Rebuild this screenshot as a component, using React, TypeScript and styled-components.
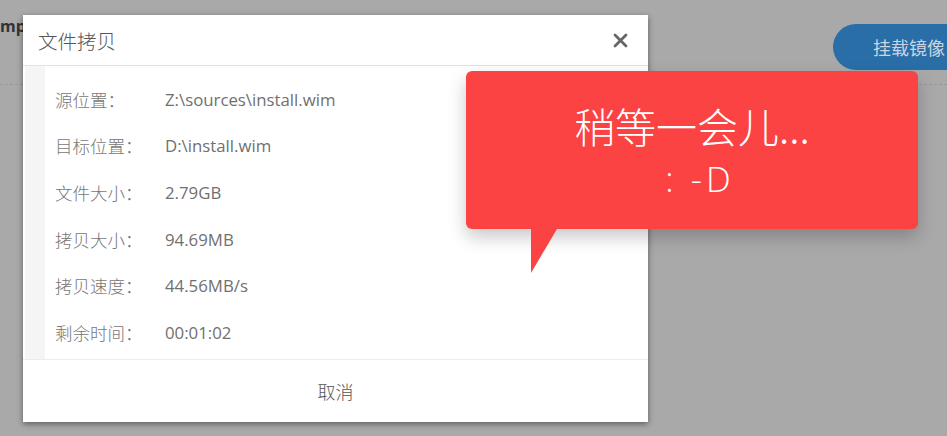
import styled, { createGlobalStyle } from "styled-components";

const GlobalStyle = createGlobalStyle`
  html, body {
    margin: 0;
    padding: 0;
    width: 947px;
    height: 436px;
    overflow: hidden;
    background-color: #a9a9a9;
    font-family: "Open Sans", "Noto Sans CJK SC", sans-serif;
  }
`;

const Page = styled.div`
  position: relative;
  width: 947px;
  height: 436px;
  background-color: #a9a9a9;
`;

const TopBar = styled.div`
  display: flex;
  justify-content: space-between;
  align-items: center;
  height: 85px;
  border-bottom: 1px dashed #999;
  box-sizing: border-box;
`;

const PageTitle = styled.span`
  align-self: flex-start;
  margin-top: 15px;
  font-size: 16px;
  font-weight: bold;
  color: #333;
`;

const MountButton = styled.button`
  width: 140px;
  height: 46px;
  margin-right: -26px;
  margin-top: 10px;
  padding: 0 0 0 40px;
  text-align: left;
  border: none;
  border-radius: 23px;
  background-color: #2a6ea8;
  color: #c9d5e2;
  font-family: "Noto Sans CJK SC", sans-serif;
  font-size: 18px;
  white-space: nowrap;
`;

const Dialog = styled.div`
  position: absolute;
  left: 23px;
  top: 15px;
  width: 625px;
  height: 407px;
  display: flex;
  flex-direction: column;
  background-color: #fff;
  box-shadow: 0 2px 6px rgba(0, 0, 0, 0.45);
`;

const Header = styled.div`
  display: flex;
  justify-content: space-between;
  align-items: center;
  height: 51px;
  padding: 0 20px 0 15px;
  border-bottom: 1px solid #e2e2e2;
  box-sizing: border-box;
  flex-shrink: 0;
`;

const Title = styled.span`
  font-family: "Noto Sans CJK SC", sans-serif;
  font-size: 19.5px;
  font-weight: 300;
  color: #555;
`;

const CloseButton = styled.span`
  display: flex;
  align-items: center;
  cursor: pointer;
`;

const Body = styled.div`
  display: flex;
  height: 293px;
  border-bottom: 1px solid #ececec;
  flex-shrink: 0;
`;

const Strip = styled.div`
  width: 20px;
  margin-left: 2px;
  background-color: #f5f5f5;
`;

const Rows = styled.div`
  display: flex;
  flex-direction: column;
  padding: 10px 0 0 10px;
`;

const Row = styled.div`
  display: flex;
  align-items: center;
  height: 46.6px;
`;

const Label = styled.span`
  width: 110px;
  color: #777;
  font-family: "Noto Sans CJK SC", sans-serif;
  font-size: 17.5px;
  font-weight: 300;
`;

const Value = styled.span`
  color: #707070;
  font-size: 16.8px;
`;

const Footer = styled.div`
  flex: 1;
  display: flex;
  justify-content: center;
  align-items: center;
  font-family: "Noto Sans CJK SC", sans-serif;
  font-size: 18px;
  font-weight: 300;
  color: #555;
`;

const Toast = styled.div`
  position: absolute;
  left: 466px;
  top: 71px;
  width: 452px;
  height: 158px;
  display: flex;
  flex-direction: column;
  align-items: center;
  box-sizing: border-box;
  padding-top: 26px;
  border-radius: 6px;
  background-color: #fc4343;
  color: #fff;
  box-shadow: 0 8px 18px rgba(0, 0, 0, 0.22);

  &::after {
    content: "";
    position: absolute;
    left: 65px;
    top: 100%;
    width: 0;
    height: 0;
    border-top: 44px solid #fc4343;
    border-right: 26px solid transparent;
  }
`;

const ToastMain = styled.span`
  font-family: "Noto Sans CJK SC", sans-serif;
  font-size: 41px;
  font-weight: 300;
  line-height: 56px;
`;

const ToastFace = styled.span`
  margin-top: 6px;
  margin-left: 16px;
  font-family: "Open Sans", sans-serif;
  font-size: 35px;
  font-weight: 300;
  line-height: 40px;
  letter-spacing: 4px;
`;

const rows = [
  { label: "源位置：", value: "Z:\\sources\\install.wim" },
  { label: "目标位置：", value: "D:\\install.wim" },
  { label: "文件大小：", value: "2.79GB" },
  { label: "拷贝大小：", value: "94.69MB" },
  { label: "拷贝速度：", value: "44.56MB/s" },
  { label: "剩余时间：", value: "00:01:02" },
];

const App = () => {
  return (
    <Page>
      <GlobalStyle />
      <TopBar>
        <PageTitle>mp</PageTitle>
        <MountButton>挂载镜像</MountButton>
      </TopBar>
      <Dialog>
        <Header>
          <Title>文件拷贝</Title>
          <CloseButton>
            <svg width="15" height="15" viewBox="0 0 15 15">
              <path d="M2 2 L13 13 M13 2 L2 13" stroke="#666" strokeWidth="2.8" strokeLinecap="round" />
            </svg>
          </CloseButton>
        </Header>
        <Body>
          <Strip />
          <Rows>
            {rows.map((r) => (
              <Row key={r.label}>
                <Label>{r.label}</Label>
                <Value>{r.value}</Value>
              </Row>
            ))}
          </Rows>
        </Body>
        <Footer>取消</Footer>
      </Dialog>
      <Toast>
        <ToastMain>稍等一会儿...</ToastMain>
        <ToastFace>: -D</ToastFace>
      </Toast>
    </Page>
  );
};

export default App;
